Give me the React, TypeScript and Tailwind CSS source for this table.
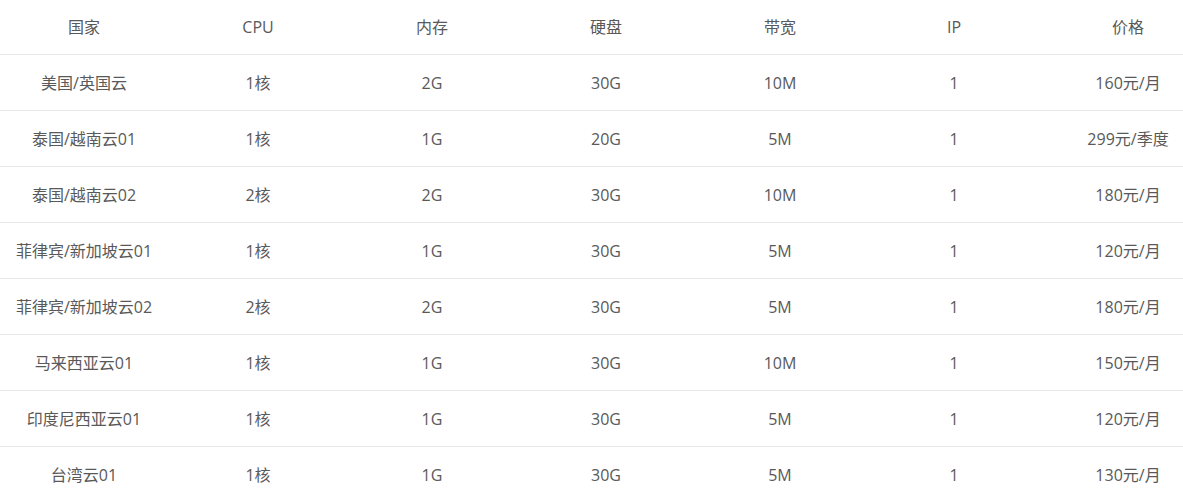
const headers = ['国家', 'CPU', '内存', '硬盘', '带宽', 'IP', '价格'];

const ROWS = [
  ['美国/英国云', '1核', '2G', '30G', '10M', '1', '160元/月'],
  ['泰国/越南云01', '1核', '1G', '20G', '5M', '1', '299元/季度'],
  ['泰国/越南云02', '2核', '2G', '30G', '10M', '1', '180元/月'],
  ['菲律宾/新加坡云01', '1核', '1G', '30G', '5M', '1', '120元/月'],
  ['菲律宾/新加坡云02', '2核', '2G', '30G', '5M', '1', '180元/月'],
  ['马来西亚云01', '1核', '1G', '30G', '10M', '1', '150元/月'],
  ['印度尼西亚云01', '1核', '1G', '30G', '5M', '1', '120元/月'],
  ['台湾云01', '1核', '1G', '30G', '5M', '1', '130元/月'],
];

export default function App() {
  return (
    <div
      className="w-full h-[502px] overflow-hidden bg-white text-[16px] text-[#595959]"
      style={{ fontFamily: '"Open Sans", "Noto Sans CJK SC", sans-serif' }}
    >
      <div className="w-[1218px] -ml-[3px]">
        {/* Header */}
        <div className="grid grid-cols-7 h-[55px] border-b border-[#e6e6e6] items-center">
          {headers.map((h) => (
            <div key={h} className="text-center">
              {h}
            </div>
          ))}
        </div>

        {ROWS.map((row, i) => (
          <div
            key={i}
            className={`grid grid-cols-7 h-[56px] items-center ${i < ROWS.length - 1 ? 'border-b border-[#e6e6e6]' : ''}`}
          >
            {row.map((cell, j) => (
              <div key={j} className="text-center">
                {cell}
              </div>
            ))}
          </div>
        ))}
      </div>
    </div>
  );
}
